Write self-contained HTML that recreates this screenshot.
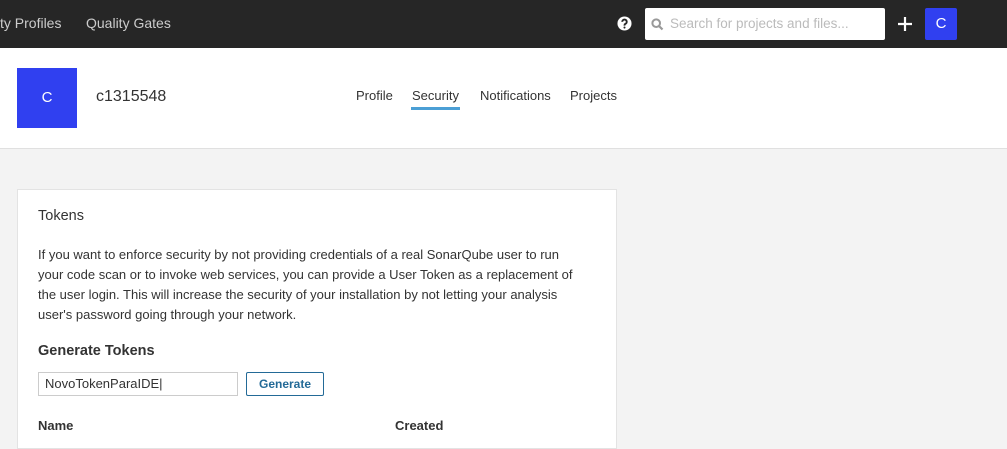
<!DOCTYPE html>
<html><head><style>
*{box-sizing:border-box;margin:0;padding:0}
body{width:1007px;height:423px;overflow:hidden;background:#f3f3f3;font-family:"Liberation Sans",sans-serif;color:#333;position:relative}
.top{position:absolute;left:0;top:0;width:1007px;height:48px;background:#262626}
.top a{position:absolute;top:15px;color:#ccc;font-size:14px}
.search{position:absolute;left:645px;top:8px;width:240px;height:32px;background:#fff;border-radius:2px}
.search span{position:absolute;left:25px;top:8px;font-size:13.5px;color:#bbb}
.av{position:absolute;left:925px;top:8px;width:32px;height:32px;background:#3040f0;color:#fff;font-size:15px;text-align:center;line-height:31px;border-radius:2px}
.hdr{position:absolute;left:0;top:48px;width:1007px;height:101px;background:#fff;border-bottom:1px solid #e0e0e0}
.bigav{position:absolute;left:17px;top:20px;width:60px;height:60px;background:#3040f0;color:#fff;text-align:center;line-height:60px;font-size:15px}
.nav{position:absolute;top:40px;font-size:13px;color:#333}
.card{position:absolute;left:17px;top:189px;width:600px;height:260px;background:#fff;border:1px solid #e3e3e3}
p{font-size:13px;line-height:20px}
</style></head><body>
<div class="top">
<a style="left:0">ty Profiles</a><a style="left:86px">Quality Gates</a>
<svg style="position:absolute;left:617px;top:16px" width="15" height="15" viewBox="0 0 16 16"><circle cx="8" cy="8" r="7.5" fill="#fff"/><path d="M5.6 6.2a2.4 2.4 0 1 1 3.3 2.2c-.6.3-.9.7-.9 1.4v.4" stroke="#262626" stroke-width="2" fill="none"/><circle cx="8" cy="12.3" r="1.1" fill="#262626"/></svg>
<div class="search"><svg style="position:absolute;left:6px;top:10px" width="13" height="13" viewBox="0 0 13 13"><circle cx="5.2" cy="5.2" r="3.8" stroke="#999" stroke-width="2" fill="none"/><path d="M8 8l3.5 3.5" stroke="#999" stroke-width="2.2"/></svg><span>Search for projects and files...</span></div>
<svg style="position:absolute;left:897px;top:16px" width="16" height="16"><path d="M8 1v14M1 8h14" stroke="#fff" stroke-width="2.2"/></svg>
<div class="av">C</div>
</div>
<div class="hdr">
<div class="bigav">C</div>
<div style="position:absolute;left:96px;top:40px;font-size:16px;color:#333">c1315548</div>
<span class="nav" style="left:356px">Profile</span>
<span class="nav" style="left:412px">Security</span>
<div style="position:absolute;left:411px;top:59px;width:49px;height:3px;background:#4b9fd5"></div>
<span class="nav" style="left:480px">Notifications</span>
<span class="nav" style="left:570px">Projects</span>
</div>
<div class="card">
<div style="position:absolute;left:20px;top:18px;font-size:14.5px">Tokens</div>
<p style="position:absolute;left:20px;top:55px;width:545px">If you want to enforce security by not providing credentials of a real SonarQube user to run your code scan or to invoke web services, you can provide a User Token as a replacement of the user login. This will increase the security of your installation by not letting your analysis user's password going through your network.</p>
<div style="position:absolute;left:20px;top:153px;font-size:14.5px;font-weight:bold">Generate Tokens</div>
<div style="position:absolute;left:20px;top:182px;width:200px;height:24px;border:1px solid #ccc;font-size:13px;padding:3px 6px">NovoTokenParaIDE|</div>
<div style="position:absolute;left:228px;top:182px;width:78px;height:24px;border:1px solid #236a97;border-radius:2px;color:#236a97;font-size:12px;font-weight:bold;text-align:center;line-height:22px">Generate</div>
<div style="position:absolute;left:20px;top:228px;font-size:13px;font-weight:bold">Name</div>
<div style="position:absolute;left:377px;top:228px;font-size:13px;font-weight:bold">Created</div>
</div>
</body></html>
